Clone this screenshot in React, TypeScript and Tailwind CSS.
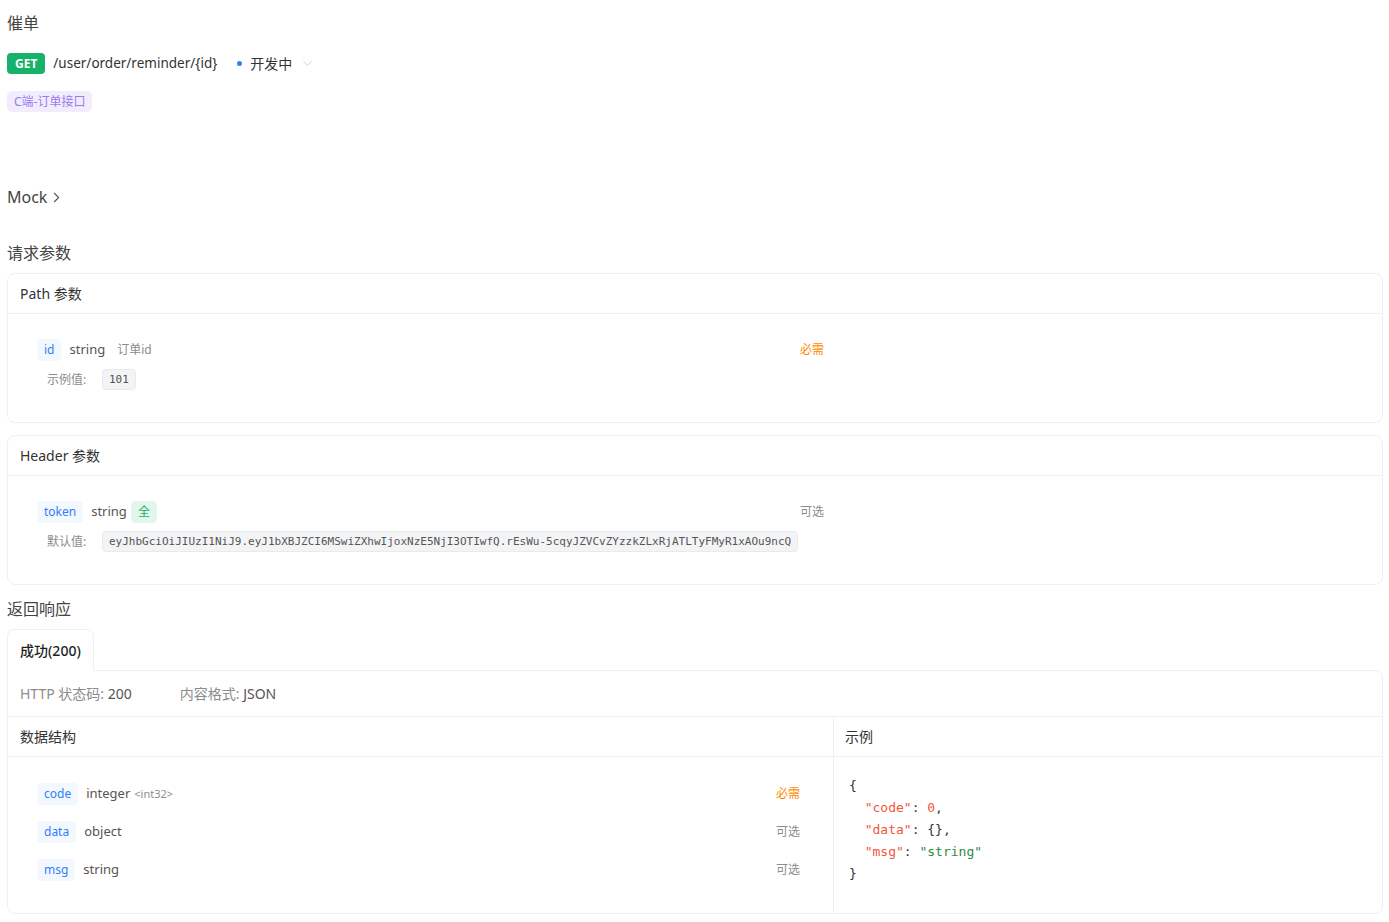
import { ChevronDown, ChevronRight } from "lucide-react";

const sans = { fontFamily: '"Noto Sans", "Noto Sans CJK SC", sans-serif' };
const mono = { fontFamily: '"DejaVu Sans Mono", "Liberation Mono", monospace' };

const token =
  "eyJhbGciOiJIUzI1NiJ9.eyJ1bXBJZCI6MSwiZXhwIjoxNzE5NjI3OTIwfQ.rEsWu-5cqyJZVCvZYzzkZLxRjATLTyFMyR1xAOu9ncQ";

function Name({ children }: { children: string }) {
  return (
    <span className="h-[22px] px-[7px] rounded-[4px] bg-[#f3f8ff] text-[#2f80f6] text-[12px] leading-[22px]">
      {children}
    </span>
  );
}

function Chip({ children }: { children: string }) {
  return (
    <span
      className="h-[21px] px-[6px] rounded-[4px] bg-[#f3f4f6] border border-[#e8eaee] text-[#555] text-[11px] leading-[19px]"
      style={mono}
    >
      {children}
    </span>
  );
}

function Card({ title, children }: { title: string; children: React.ReactNode }) {
  return (
    <div className="border border-[#eff0f2] rounded-[8px]">
      <div className="h-[40px] flex items-center px-[12px] border-b border-[#eff0f2] text-[14px] text-[#333]">
        {title}
      </div>
      <div className="pl-[29px] pt-[25px] pb-[32px]">{children}</div>
    </div>
  );
}

function FieldRow({ name, type, extra, req }: { name: string; type: string; extra?: React.ReactNode; req: boolean }) {
  return (
    <div className="flex items-center h-[22px]">
      <Name>{name}</Name>
      <span className="ml-[8px] text-[13px] text-[#555]">{type}</span>
      {extra}
      <span className={"ml-auto text-[12px] " + (req ? "text-[#ff8a00]" : "text-[#8c8c8c]")}>
        {req ? "必需" : "可选"}
      </span>
    </div>
  );
}

export default function App() {
  return (
    <div className="bg-white min-h-[922px] pl-[7px] pr-[6px] pb-[20px] text-[#333]" style={sans}>
      <div className="pt-[11px] text-[16px] leading-[24px] text-[#444]">催单</div>

      <div className="mt-[17px] flex items-center h-[22px]">
        <span className="h-[21px] px-[8px] rounded-[4px] bg-[#17b26a] text-white text-[12px] font-bold leading-[21px]">
          GET
        </span>
        <span className="ml-[8px] text-[13.5px] text-[#333]">/user/order/reminder/{"{id}"}</span>
        <span className="ml-[20px] w-[5px] h-[5px] rounded-full bg-[#2f80f6]" />
        <span className="ml-[8px] text-[14px] text-[#333]">开发中</span>
        <ChevronDown className="ml-[8px] text-[#c8c8c8]" size={15} strokeWidth={1.25} />
      </div>

      <div className="mt-[17px] flex">
        <span className="h-[21px] px-[7px] rounded-[5px] bg-[#f1edfd] text-[#9a7cf0] text-[12px] leading-[21px]">
          C端-订单接口
        </span>
      </div>

      <div className="mt-[73px] flex items-center h-[24px] text-[16px] text-[#444]">
        Mock
        <ChevronRight className="ml-[1px] text-[#555]" size={17} strokeWidth={1.5} />
      </div>

      <div className="mt-[32px] text-[16px] leading-[24px] text-[#444]">请求参数</div>

      <div className="mt-[8px]">
        <Card title="Path 参数">
          <div className="w-[787px]">
            <FieldRow
              name="id"
              type="string"
              req
              extra={<span className="ml-[12px] text-[12px] text-[#8c8c8c]">订单id</span>}
            />
          </div>
          <div className="mt-[8px] flex items-center pl-[10px]">
            <span className="w-[55px] text-[12px] text-[#8c8c8c]">示例值:</span>
            <Chip>101</Chip>
          </div>
        </Card>
      </div>

      <div className="mt-[12px]">
        <Card title="Header 参数">
          <div className="w-[787px]">
            <FieldRow
              name="token"
              type="string"
              req={false}
              extra={
                <span className="ml-[4px] h-[22px] px-[7px] rounded-[4px] bg-[#e3f6ec] text-[#17b26a] text-[12px] leading-[22px]">
                  全
                </span>
              }
            />
          </div>
          <div className="mt-[8px] flex items-center pl-[10px]">
            <span className="w-[55px] text-[12px] text-[#8c8c8c]">默认值:</span>
            <Chip>{token}</Chip>
          </div>
        </Card>
      </div>

      <div className="mt-[12px] text-[16px] leading-[24px] text-[#444]">返回响应</div>

      <div className="mt-[8px] flex">
        <div className="h-[42px] px-[12px] flex items-center border border-b-0 border-[#eff0f2] rounded-t-[7px] bg-white text-[14px] font-medium text-[#1f1f1f] relative z-10">
          成功(200)
        </div>
      </div>
      <div className="-mt-[1px] border border-[#eff0f2] rounded-b-[8px] rounded-tr-[8px]">
        <div className="h-[46px] flex items-center px-[12px] border-b border-[#eff0f2] text-[14px]">
          <span className="text-[#8c8c8c]">
            HTTP 状态码: <span className="text-[#555]">200</span>
          </span>
          <span className="ml-[48px] text-[#8c8c8c]">
            内容格式: <span className="text-[#555]">JSON</span>
          </span>
        </div>
        <div className="flex">
          <div className="w-[826px] border-r border-[#eff0f2]">
            <div className="h-[40px] flex items-center px-[12px] border-b border-[#eff0f2] text-[14px] text-[#333]">
              数据结构
            </div>
            <div className="pl-[29px] pr-[33px] pt-[26px] pb-[32px] flex flex-col gap-[16px]">
              <FieldRow
                name="code"
                type="integer"
                req
                extra={<span className="ml-[4px] text-[11px] text-[#8c8c8c]">&lt;int32&gt;</span>}
              />
              <FieldRow name="data" type="object" req={false} />
              <FieldRow name="msg" type="string" req={false} />
            </div>
          </div>
          <div className="flex-1">
            <div className="h-[40px] flex items-center px-[11px] border-b border-[#eff0f2] text-[14px] text-[#333]">
              示例
            </div>
            <div className="pl-[15px] pt-[18px] text-[13px] leading-[22px] text-[#333] whitespace-pre" style={mono}>
              <div>{"{"}</div>
              <div>
                {"  "}
                <span className="text-[#f0573a]">"code"</span>: <span className="text-[#f0573a]">0</span>,
              </div>
              <div>
                {"  "}
                <span className="text-[#f0573a]">"data"</span>: {"{}"},
              </div>
              <div>
                {"  "}
                <span className="text-[#f0573a]">"msg"</span>: <span className="text-[#2e8b3e]">"string"</span>
              </div>
              <div>{"}"}</div>
            </div>
          </div>
        </div>
      </div>
    </div>
  );
}
